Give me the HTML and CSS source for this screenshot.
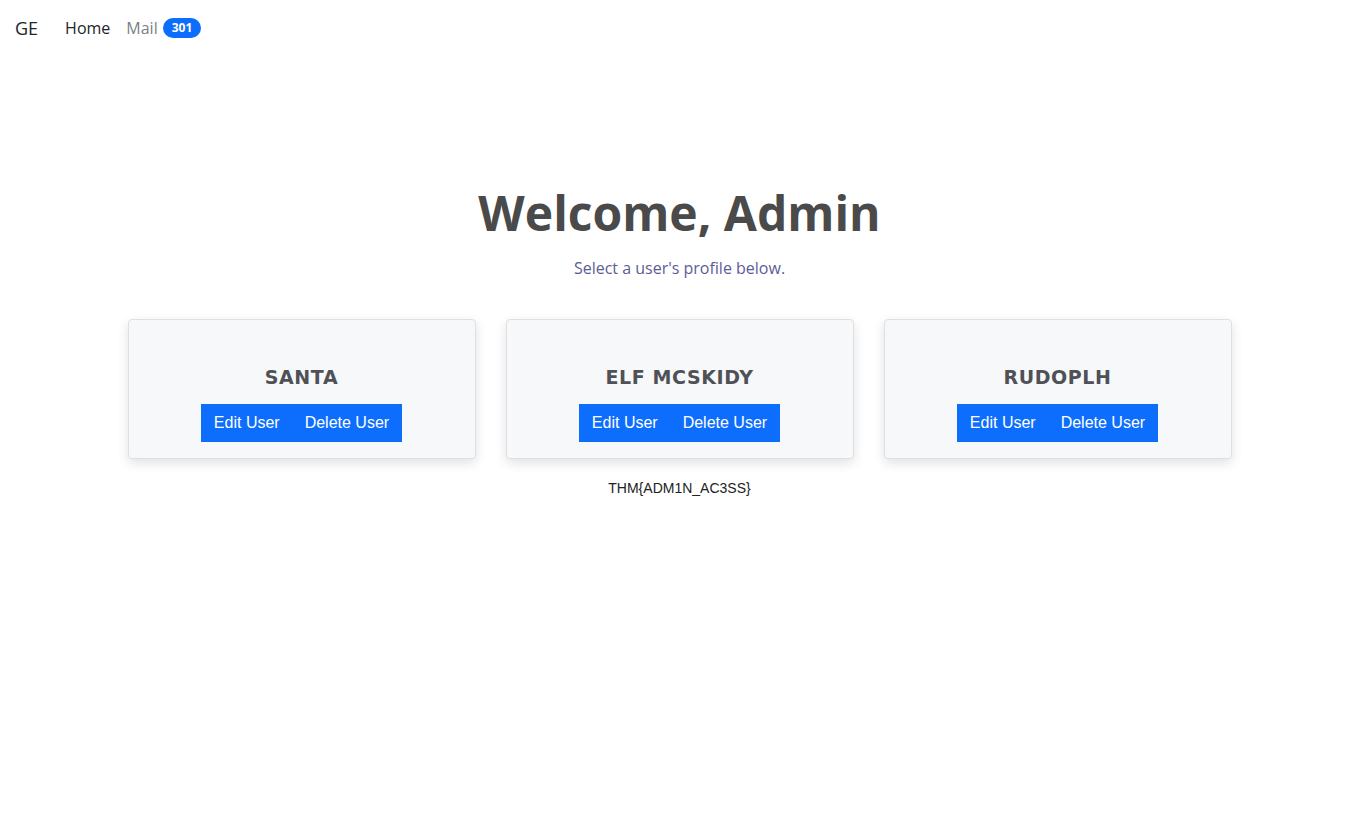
FILE: index.html
```html
<!DOCTYPE html>
<html>
<head>
<meta charset="utf-8">
<link rel="stylesheet" href="styles.css">
</head>
<body>
<nav class="navbar">
  <span class="brand">GE</span>
  <a class="nav-link active" href="#">Home</a>
  <a class="nav-link" href="#">Mail <span class="badge">301</span></a>
</nav>
<main class="main">
  <h1 class="title">Welcome, Admin</h1>
  <p class="subtitle">Select a user's profile below.</p>
  <div class="cards">
    <div class="card">
      <h2 class="card-name">SANTA</h2>
      <div class="btn-group"><button class="btn">Edit User</button><button class="btn">Delete User</button></div>
    </div>
    <div class="card">
      <h2 class="card-name">ELF MCSKIDY</h2>
      <div class="btn-group"><button class="btn">Edit User</button><button class="btn">Delete User</button></div>
    </div>
    <div class="card">
      <h2 class="card-name">RUDOPLH</h2>
      <div class="btn-group"><button class="btn">Edit User</button><button class="btn">Delete User</button></div>
    </div>
  </div>
  <p class="flag">THM{ADM1N_AC3SS}</p>
</main>
</body>
</html>
```
FILE: styles.css
```css
html, body { margin: 0; padding: 0; background: #fff; }
body { font-family: "Open Sans", sans-serif; color: #212529; }

.navbar {
  display: flex;
  align-items: center;
  height: 56px;
  padding: 0 15px;
}
.brand {
  font-size: 18px;
  color: #212529;
  margin-right: 27px;
  line-height: 1;
}
.nav-link {
  font-size: 16px;
  text-decoration: none;
  color: #7a7f85;
  margin-right: 16px;
  display: flex;
  align-items: center;
  gap: 5px;
}
.nav-link.active { color: #212529; }
.badge {
  background: #0d6efd;
  color: #fff;
  font-size: 12px;
  font-weight: 700;
  border-radius: 10px;
  padding: 0 9px;
  height: 20px;
  line-height: 20px;
  display: inline-block;
}

.main {
  display: flex;
  flex-direction: column;
  align-items: center;
  padding-top: 125px;
}
.title {
  margin: 0;
  font-size: 48px;
  font-weight: 700;
  color: #4a4a4a;
  line-height: 64px;
}
.subtitle {
  margin: 11px 0 0;
  font-size: 16px;
  color: #5d5c97;
  line-height: 24px;
}
.cards {
  display: flex;
  gap: 30px;
  margin-top: 39px;
}
.card {
  width: 346px;
  height: 138px;
  background: #f7f8fa;
  border: 1px solid #dde0e4;
  border-radius: 4px;
  box-shadow: 0 4px 12px rgba(0, 0, 0, 0.12);
  display: flex;
  flex-direction: column;
  align-items: center;
  box-sizing: content-box;
}
.card-name {
  margin: 44px 0 0;
  font-family: "DejaVu Sans", sans-serif;
  font-weight: 700;
  font-size: 19px;
  letter-spacing: 0.6px;
  color: #4f5156;
  line-height: 26px;
}
.btn-group {
  display: flex;
  margin-top: 14px;
}
.btn {
  font-family: "Liberation Sans", Arial, sans-serif;
  font-size: 16px;
  color: #fff;
  background: #0d6efd;
  border: 0;
  border-radius: 0;
  height: 38px;
  padding: 0 12.5px;
  margin: 0;
}
.flag {
  margin: 21px 0 0;
  font-family: "Liberation Sans", Arial, sans-serif;
  font-size: 14px;
  color: #222;
}
```
